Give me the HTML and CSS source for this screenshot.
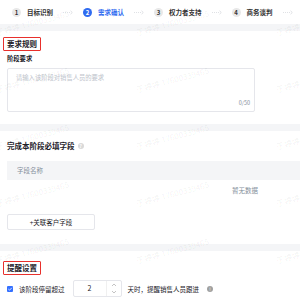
FILE: index.html
```html
<!DOCTYPE html>
<html lang="zh-CN">
<head>
  <meta charset="UTF-8">
  <title>阶段设置</title>
  <link rel="stylesheet" href="styles.css">
</head>
<body>

  <div class="passos">
    <div class="passo">
      <span class="num">1</span>
      <span class="rotulo">目标识别</span>
      <svg class="seta" width="10" height="5" viewBox="0 0 10 5"><path d="M0 2.5 H7" stroke="#c9cdd4" stroke-width="0.6" stroke-dasharray="1 1"/><path d="M7.5 0.8 L9.3 2.5 L7.5 4.2" fill="none" stroke="#c9cdd4" stroke-width="0.6"/></svg>
    </div>
    <div class="passo ativo">
      <span class="num">2</span>
      <span class="rotulo">需求确认</span>
      <svg class="seta" width="10" height="5" viewBox="0 0 10 5"><path d="M0 2.5 H7" stroke="#c9cdd4" stroke-width="0.6" stroke-dasharray="1 1"/><path d="M7.5 0.8 L9.3 2.5 L7.5 4.2" fill="none" stroke="#c9cdd4" stroke-width="0.6"/></svg>
    </div>
    <div class="passo">
      <span class="num">3</span>
      <span class="rotulo">权力者支持</span>
      <svg class="seta" width="10" height="5" viewBox="0 0 10 5"><path d="M0 2.5 H7" stroke="#c9cdd4" stroke-width="0.6" stroke-dasharray="1 1"/><path d="M7.5 0.8 L9.3 2.5 L7.5 4.2" fill="none" stroke="#c9cdd4" stroke-width="0.6"/></svg>
    </div>
    <div class="passo">
      <span class="num">4</span>
      <span class="rotulo">商务谈判</span>
      <svg class="seta" width="10" height="5" viewBox="0 0 10 5"><path d="M0 2.5 H7" stroke="#c9cdd4" stroke-width="0.6" stroke-dasharray="1 1"/><path d="M7.5 0.8 L9.3 2.5 L7.5 4.2" fill="none" stroke="#c9cdd4" stroke-width="0.6"/></svg>
    </div>
  </div>

  <div class="faixa"></div>

  <section class="bloco requisitos">
    <h3 class="titulo marcado">要求规则</h3>
    <label class="campo-rotulo">阶段要求</label>
    <div class="area">
      <span class="placeholder">请输入该阶段对销售人员的要求</span>
      <span class="contador">0/50</span>
    </div>
  </section>

  <div class="faixa"></div>

  <section class="bloco campos">
    <h3 class="titulo">完成本阶段必填字段 <span class="ajuda">?</span></h3>
    <div class="tabela-caixa">
      <div class="tabela">
        <div class="cabecalho">字段名称</div>
        <div class="vazio">暂无数据</div>
      </div>
    </div>
    <button class="botao">+关联客户字段</button>
  </section>

  <div class="faixa"></div>

  <section class="bloco lembrete">
    <h3 class="titulo marcado">提醒设置</h3>
    <div class="linha">
      <span class="check">
        <svg width="6" height="6" viewBox="0 0 6 6"><path d="M1.3 3 L2.5 4.2 L4.8 1.8" fill="none" stroke="#fff" stroke-width="0.8"/></svg>
      </span>
      <span>该阶段停留超过</span>
      <div class="numero">
        <span class="valor">2</span>
        <span class="giro">
          <svg width="6" height="4" viewBox="0 0 6 4"><path d="M1 3 L3 1 L5 3" fill="none" stroke="#aaa" stroke-width="0.7"/></svg>
          <svg width="6" height="4" viewBox="0 0 6 4"><path d="M1 1 L3 3 L5 1" fill="none" stroke="#aaa" stroke-width="0.7"/></svg>
        </span>
      </div>
      <span>天时，提醒销售人员跟进</span>
      <span class="info">!</span>
    </div>
  </section>

  <div class="marca-dagua" id="marca"></div>

  <script>
    const marca = document.getElementById('marca');
    for (let i = 0; i < 15; i++) {
      const s = document.createElement('span');
      s.textContent = '于婷婷 17600339465';
      marca.appendChild(s);
    }
  </script>
</body>
</html>
```

FILE: styles.css
```css
body {
  margin: 0;
  width: 300px;
  height: 300px;
  overflow: hidden;
  position: relative;
  background: #fff;
  font-family: "Noto Sans CJK SC", "Noto Sans", sans-serif;
  color: #1d2129;
  font-size: 6.5px;
}

.passos {
  display: flex;
  align-items: center;
  height: 24px;
  padding-left: 12px;
  gap: 10px;
  white-space: nowrap;
  overflow: hidden;
}

.passo {
  display: flex;
  align-items: center;
  gap: 6px;
  flex-shrink: 0;
}

.num {
  width: 9px;
  height: 9px;
  border-radius: 50%;
  background: #e8e8e8;
  color: #333;
  font-size: 6px;
  font-weight: bold;
  display: flex;
  align-items: center;
  justify-content: center;
}

.rotulo {
  font-weight: 600;
  color: #333;
}

.seta {
  margin-left: 4px;
}

.passo.ativo .num {
  background: #2f6bf0;
  color: #fff;
}

.passo.ativo .rotulo {
  color: #2f6bf0;
}

.faixa {
  height: 7px;
  background: #f4f5f7;
}

.bloco {
  padding: 6px 7px 10px;
}

.requisitos {
  padding-bottom: 12px;
}

.titulo {
  margin: 0;
  font-size: 7.5px;
  font-weight: bold;
  color: #1d2129;
  line-height: 12px;
  display: flex;
  align-items: center;
  gap: 3px;
}

.titulo.marcado {
  display: inline-block;
  margin-left: -4px;
  padding: 0 3px;
  border: 1.5px solid #e8302c;
  border-radius: 1px;
}

.campo-rotulo {
  display: block;
  margin-top: 4px;
  font-weight: bold;
  font-size: 6.3px;
  line-height: 8px;
}

.area {
  margin-top: 5px;
  width: 248px;
  height: 44px;
  box-sizing: border-box;
  border: 1px solid #e5e6eb;
  border-radius: 2px;
  padding: 4px 8px;
  display: flex;
  flex-direction: column;
  justify-content: space-between;
}

.placeholder {
  color: #c0c4cc;
  font-size: 6.3px;
}

.contador {
  align-self: flex-end;
  color: #86909c;
  font-size: 5.5px;
  margin-right: -4px;
}

.ajuda {
  width: 6px;
  height: 6px;
  border-radius: 50%;
  background: #d9d9d9;
  color: #fff;
  font-size: 5px;
  display: inline-flex;
  align-items: center;
  justify-content: center;
}

.campos {
  padding-top: 9px;
  padding-bottom: 14px;
}

.tabela-caixa {
  margin-top: 9px;
  margin-right: -7px;
  overflow: hidden;
}

.tabela {
  width: 476px;
}

.cabecalho {
  background: #f4f5f7;
  height: 19px;
  line-height: 19px;
  padding-left: 10px;
  color: #86909c;
}

.vazio {
  text-align: center;
  color: #86909c;
  padding: 6px 0;
  line-height: 8px;
}

.botao {
  margin-top: 14px;
  width: 88px;
  height: 16px;
  background: #fff;
  border: 1px solid #e5e6eb;
  border-radius: 2px;
  font-family: inherit;
  font-size: 6.5px;
  color: #1d2129;
  padding: 0;
}

.lembrete {
  padding-top: 10px;
}

.linha {
  display: flex;
  align-items: center;
  gap: 6px;
  margin-top: 5px;
  white-space: nowrap;
}

.check {
  width: 6px;
  height: 6px;
  background: #3470ff;
  border-radius: 1px;
  display: flex;
}

.numero {
  width: 49px;
  height: 17px;
  box-sizing: border-box;
  border: 1px solid #e5e6eb;
  border-radius: 2px;
  display: flex;
  margin-left: 2px;
}

.valor {
  flex: 1;
  text-align: center;
  line-height: 15px;
  font-size: 7px;
}

.giro {
  width: 14px;
  display: flex;
  flex-direction: column;
  align-items: center;
  justify-content: space-evenly;
  border-left: 1px solid #f0f0f0;
}

.info {
  width: 6px;
  height: 6px;
  border-radius: 50%;
  background: #a0a0a0;
  color: #fff;
  font-size: 4.5px;
  display: flex;
  align-items: center;
  justify-content: center;
  margin-left: 2px;
}

.marca-dagua {
  position: absolute;
  top: 0;
  left: 0;
  width: 300px;
  height: 300px;
  overflow: hidden;
  display: grid;
  grid-template-columns: repeat(3, 140px);
  grid-auto-rows: 57px;
  padding-top: 8px;
  box-sizing: border-box;
  pointer-events: none;
}

.marca-dagua span {
  transform: rotate(-15deg);
  color: rgba(0, 0, 0, 0.06);
  font-size: 8px;
  white-space: nowrap;
}
```
